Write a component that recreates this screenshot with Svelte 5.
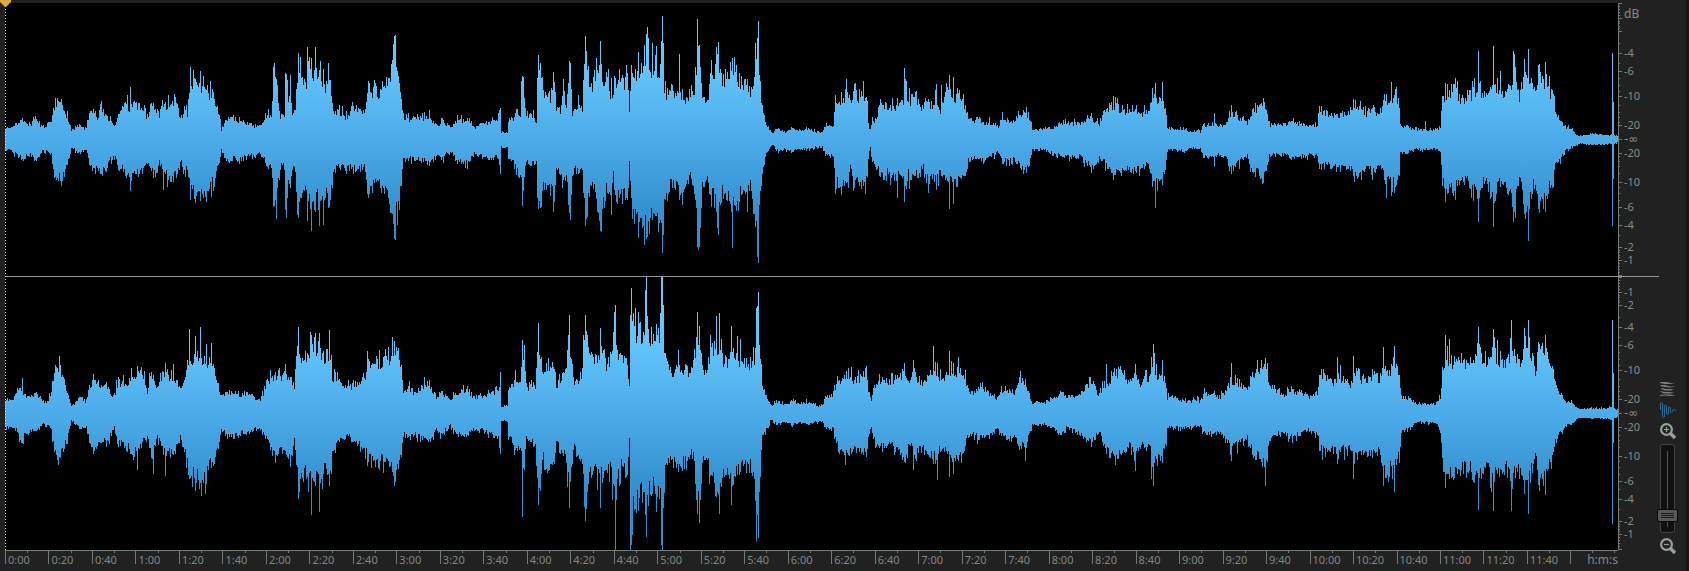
<script lang="ts">
  type Point = [x: number, up: number, down: number];

  interface Channel {
    name: string;
    envelope: Point[];
    peaks: Point[];
  }

  // Amplitudes are stored in steps of 1/375 of full scale
  const FULL_SCALE = 375;
  const FIRST_COLUMN = 5;
  const LAST_COLUMN = 1618;

  // "x up down" triplets separated by commas
  function parse(data: string): Point[] {
    return data
      .trim()
      .split(',')
      .map((item) => item.trim().split(' ').map(Number) as Point);
  }

  const channels: Channel[] = [
    {
      name: 'Left channel',
      envelope: parse(`
        5 33 33,10 30 30,15 42 42,20 45 50,22 60 56,25 45 52,28 40 42,32 42 48,34 60 62,37 48 52,42 36 35,47 36 32,
        51 55 45,54 92 90,57 110 118,60 100 105,63 95 105,66 68 75,69 50 45,71 25 22,75 32 30,78 42 42,82 35 33,
        86 30 30,89 72 65,93 95 92,97 55 80,101 85 92,105 70 80,109 55 62,113 42 50,115 40 50,118 80 80,122 85 80,
        125 100 95,130 90 110,135 100 95,139 90 100,144 85 70,146 55 60,151 100 85,157 85 85,159 68 60,162 100 90,
        167 95 105,172 115 110,177 90 100,180 60 60,184 80 85,187 75 85,190 160 145,195 150 140,200 155 150,
        205 140 145,210 130 130,213 120 120,217 85 85,220 50 55,221 22 22,224 50 50,228 62 55,234 60 55,240 48 52,
        246 48 50,252 40 42,258 35 40,263 45 48,266 70 72,271 70 72,273 180 170,276 190 175,278 100 110,280 65 70,
        284 65 75,286 175 185,288 100 130,290 148 130,292 70 70,295 80 90,297 180 200,299 200 200,302 160 150,
        306 150 155,309 210 160,311 200 200,315 195 155,319 180 170,323 170 170,326 150 150,329 190 180,331 140 140,
        333 70 80,337 80 80,342 75 75,347 60 75,352 85 75,357 80 85,363 75 75,365 80 85,367 150 150,371 140 130,
        376 135 120,382 140 130,388 160 150,392 200 200,394 285 270,396 190 200,399 165 160,401 130 130,403 60 60,
        410 57 54,420 60 58,425 62 60,430 60 68,435 45 50,438 32 40,441 60 60,446 42 40,452 35 35,457 55 55,
        462 55 62,468 60 65,474 35 42,480 45 48,490 50 52,497 55 50,500 75 90,501 20 20,507 20 20,508 58 60,
        513 60 65,516 90 90,519 70 100,520 65 90,521 150 120,523 175 170,525 80 70,529 65 65,533 75 70,536 50 60,
        537 170 150,539 220 185,541 160 170,543 130 125,547 120 140,551 120 140,554 180 170,556 90 85,560 85 100,
        563 140 130,566 85 90,568 190 170,570 210 190,572 70 95,576 90 80,579 110 100,582 90 90,584 200 190,
        585 270 235,587 200 200,590 155 120,594 160 140,597 200 190,600 220 230,603 160 170,606 170 140,610 130 140,
        613 120 100,615 160 170,619 165 160,624 160 160,628 150 150,629 60 60,630 120 130,631 190 190,635 180 210,
        639 195 230,643 185 220,646 270 265,649 200 210,653 210 195,657 190 200,660 190 220,661 270 260,662 335 312,
        664 150 190,666 130 150,670 130 130,675 120 130,680 130 140,685 110 135,690 120 110,694 125 130,696 200 200,
        697 300 290,700 200 230,702 130 140,706 110 100,710 150 150,715 190 165,718 230 220,721 165 145,726 180 155,
        731 200 190,735 180 185,740 165 150,746 165 150,750 130 130,753 170 180,755 240 240,758 280 310,759 190 200,
        761 120 120,763 70 75,766 45 40,769 30 25,772 18 16,777 30 30,784 22 28,792 32 32,800 25 27,808 30 28,
        815 22 22,822 22 22,825 40 45,833 40 45,835 110 120,838 115 130,843 110 125,847 145 120,850 100 80,
        854 130 140,858 120 110,863 135 140,867 95 110,868 45 50,870 25 22,872 50 65,876 60 70,879 100 95,884 100 90,
        890 90 100,896 95 105,902 105 110,905 140 140,908 105 100,913 120 110,918 100 95,922 80 75,926 115 100,
        931 100 105,936 115 120,940 85 95,945 125 110,950 115 115,956 115 120,962 110 100,965 90 80,968 60 60,
        973 50 50,978 65 60,983 45 60,988 50 50,994 40 45,998 30 35,1001 65 60,1007 55 60,1013 50 55,1016 60 65,
        1020 75 75,1025 75 80,1028 70 70,1032 28 30,1037 28 28,1043 30 28,1050 30 35,1056 38 40,1062 45 48,
        1068 45 48,1074 45 48,1080 45 50,1086 60 65,1092 60 75,1099 45 55,1102 70 55,1106 85 75,1112 100 95,
        1118 90 85,1125 80 80,1132 90 90,1138 75 85,1144 75 75,1149 80 75,1151 120 110,1155 115 130,1160 110 110,
        1165 100 100,1167 30 30,1175 28 28,1185 28 33,1192 18 25,1198 26 28,1200 20 24,1203 40 48,1212 44 50,
        1219 38 42,1226 45 55,1230 75 80,1235 70 80,1241 60 55,1247 45 50,1250 70 85,1256 90 90,1262 105 110,
        1266 90 90,1269 42 40,1277 42 42,1285 42 42,1293 50 55,1302 40 48,1310 42 45,1317 42 45,1319 85 80,
        1325 75 75,1332 65 75,1338 70 80,1345 75 70,1351 75 85,1354 95 95,1360 85 100,1366 75 80,1372 90 90,
        1377 75 80,1382 90 80,1384 120 115,1390 110 120,1395 125 130,1399 105 100,1400 40 35,1407 38 38,1414 28 28,
        1425 28 28,1435 26 27,1440 35 32,1442 110 110,1446 130 140,1454 150 145,1460 115 110,1466 120 120,
        1472 130 130,1478 150 160,1483 120 120,1490 135 130,1493 150 175,1499 140 120,1506 140 130,1511 165 165,
        1514 195 195,1517 160 150,1519 110 110,1523 175 165,1528 180 190,1533 140 130,1536 130 140,1538 180 180,
        1545 165 175,1550 135 130,1553 120 120,1555 75 70,1560 50 55,1565 38 35,1572 25 20,1578 10 12,1590 14 14,
        1600 14 14,1610 12 12,1612 20 20,1615 10 10,1618 10 10`),
      peaks: parse(`
        130 145 142,163 90 138,190 200 165,195 165 175,200 188 170,203 175 160,273 200 185,285 183 195,298 238 215,
        307 253 225,311 225 250,315 255 200,319 190 238,323 195 235,328 210 188,394 285 272,429 82 72,500 87 95,
        522 175 182,538 233 190,553 186 200,563 165 110,569 217 202,585 285 238,600 270 252,608 195 150,611 170 208,
        619 195 160,626 205 160,638 240 270,646 290 272,647 310 268,652 265 220,656 256 210,661 270 230,662 338 312,
        679 235 165,682 140 180,697 332 295,699 260 295,711 218 185,716 255 200,718 268 262,732 225 298,734 228 180,
        747 165 200,755 265 240,758 326 340,841 130 152,846 165 120,865 115 150,897 115 160,904 197 172,909 142 135,
        928 110 146,936 152 138,941 150 100,949 178 192,953 172 178,957 142 130,1026 90 92,1113 120 110,1152 142 130,
        1155 155 188,1162 158 125,1214 72 75,1231 95 95,1263 115 120,1353 112 100,1386 125 162,1391 158 155,
        1395 140 130,1425 50 30,1445 155 172,1455 170 165,1478 242 228,1493 256 240,1500 187 130,1513 243 228,
        1524 220 205,1528 249 280,1538 205 190,1545 212 200,1612 239 239,1613 102 108`)
    },
    {
      name: 'Right channel',
      envelope: parse(`
        5 38 40,12 38 38,16 55 50,21 70 75,25 50 60,30 50 50,37 55 50,42 35 30,47 30 30,51 60 50,54 130 110,
        57 140 140,60 120 115,64 95 95,67 65 70,71 22 20,75 30 30,80 45 42,86 35 40,89 75 75,93 100 100,97 95 95,
        101 80 80,106 80 75,111 55 60,114 48 40,117 85 80,122 85 80,127 90 90,131 100 110,136 115 110,143 110 80,
        147 65 65,151 110 110,157 70 65,161 110 90,165 125 120,169 95 90,173 110 125,178 80 75,181 70 65,185 110 110,
        189 160 160,195 160 175,200 160 180,205 150 190,209 150 150,213 140 140,217 90 90,221 45 45,226 65 60,
        233 60 70,240 50 55,246 60 55,252 50 50,260 40 40,264 65 60,269 95 90,275 105 110,280 100 100,285 110 110,
        290 100 120,294 75 80,297 190 180,301 170 180,306 160 170,310 190 190,315 195 185,320 185 190,325 160 150,
        330 180 180,332 100 100,337 95 85,342 80 75,348 75 60,353 80 90,360 90 90,365 95 100,367 140 130,373 130 120,
        380 140 130,387 150 140,391 175 150,394 200 195,398 150 150,401 120 120,403 58 60,408 75 65,412 60 60,
        418 60 65,425 85 70,430 75 75,436 45 45,441 60 60,450 40 35,457 60 60,465 70 65,473 45 45,480 50 45,
        490 55 60,498 65 65,500 90 95,501 20 18,507 22 20,508 75 60,513 85 85,517 100 110,520 70 90,522 190 160,
        524 150 150,526 70 65,530 80 75,535 75 90,537 200 200,540 150 220,543 130 120,547 140 160,553 135 160,
        556 80 75,560 95 100,565 100 120,568 240 190,571 160 170,573 95 100,578 100 110,582 120 130,584 230 240,
        587 220 240,590 155 160,596 160 165,601 180 180,605 140 160,610 150 155,614 240 230,617 160 190,621 150 150,
        626 160 160,628 110 110,629 75 75,631 280 330,634 240 250,638 230 230,642 220 220,646 280 270,650 220 200,
        656 200 215,660 240 240,662 360 360,664 200 200,665 160 160,668 130 130,672 120 135,680 130 140,688 120 120,
        693 130 120,696 200 220,699 190 240,703 110 130,706 120 110,710 180 170,715 190 210,719 200 225,723 150 160,
        728 140 165,732 200 210,737 160 160,743 150 150,750 140 150,754 150 170,756 270 280,759 200 220,762 70 65,
        767 40 40,771 20 15,776 35 32,783 25 24,793 35 30,800 28 26,808 32 30,815 22 24,822 22 24,825 45 42,
        833 50 45,836 90 85,840 95 110,847 110 120,852 90 100,858 95 100,863 110 110,867 100 110,868 60 60,871 35 35,
        873 75 75,879 100 95,884 95 90,890 90 85,896 100 110,904 110 120,909 95 90,915 100 110,921 90 95,926 100 110,
        932 100 115,937 120 120,941 90 90,946 110 115,952 120 125,958 120 125,964 115 100,968 65 60,974 60 60,
        979 75 70,985 70 60,991 50 60,997 40 45,1001 65 60,1008 65 70,1014 60 60,1018 100 90,1024 95 95,1028 65 70,
        1032 30 30,1040 32 30,1048 32 35,1056 50 50,1062 60 60,1066 45 40,1073 50 50,1080 55 55,1086 80 75,
        1092 85 80,1099 50 50,1103 80 85,1109 90 100,1115 115 115,1120 120 120,1125 95 100,1130 90 90,1134 125 125,
        1139 85 90,1145 95 100,1150 110 100,1153 140 160,1157 110 120,1162 115 120,1166 80 80,1167 45 40,1175 45 40,
        1183 35 40,1190 35 38,1198 38 38,1200 30 32,1203 55 55,1212 58 60,1220 45 50,1226 70 80,1232 90 100,
        1238 90 85,1243 75 80,1247 65 65,1252 110 110,1258 120 125,1264 150 140,1268 100 100,1271 80 60,1276 65 60,
        1283 50 55,1290 65 65,1297 60 62,1305 50 45,1312 50 50,1318 60 60,1319 100 100,1326 100 110,1333 85 90,
        1338 110 115,1345 95 100,1350 75 90,1354 130 130,1360 95 120,1367 100 110,1373 105 110,1379 100 100,
        1383 130 150,1389 120 160,1395 140 140,1399 115 120,1401 50 50,1408 45 48,1414 28 25,1425 26 24,1436 28 27,
        1440 45 50,1442 110 120,1446 150 170,1452 150 175,1460 145 160,1467 140 150,1473 150 165,1478 200 195,
        1482 150 160,1488 160 150,1493 180 190,1500 150 150,1507 150 160,1512 200 200,1516 150 150,1520 140 150,
        1524 200 200,1529 190 190,1535 120 110,1538 180 190,1545 180 195,1549 130 120,1552 150 130,1555 75 80,
        1560 60 50,1566 35 35,1572 30 28,1578 12 12,1590 14 14,1605 13 13,1612 20 18,1615 12 12,1618 12 12`),
      peaks: parse(`
        22 98 80,59 158 120,137 130 155,153 105 165,165 138 172,189 232 180,195 212 212,200 238 190,206 190 195,
        211 195 150,298 238 236,311 215 280,315 220 200,319 220 270,329 230 200,367 172 145,392 210 160,394 200 200,
        429 92 70,500 115 112,515 120 100,522 203 285,538 250 252,569 270 260,585 270 295,600 235 260,614 280 200,
        615 297 375,630 270 375,631 345 360,638 278 268,645 338 280,646 375 340,656 245 270,661 375 360,662 375 375,
        678 175 160,697 278 275,699 240 300,716 268 230,719 275 275,731 240 250,737 213 170,740 205 160,756 290 350,
        757 295 280,758 335 342,851 128 110,866 130 120,904 138 132,913 148 155,933 185 140,937 140 182,949 173 175,
        953 140 165,958 155 130,1025 95 130,1106 135 110,1135 135 158,1151 155 180,1153 192 200,1162 148 135,
        1231 140 130,1265 152 200,1337 155 140,1353 158 180,1383 184 200,1394 185 215,1445 215 205,1449 205 180,
        1478 238 265,1493 232 267,1511 256 267,1524 235 220,1528 256 277,1539 190 212,1545 215 225,1612 256 304,
        1613 110 80`)
    }
  ];

  // Small seeded generator, so the wave looks the same on each load
  function createRandom(seed: number) {
    let state = seed;
    return () => {
      state = (state * 1664525 + 1013904223) % 4294967296;
      return state / 4294967296;
    };
  }

  function wavePath(channel: Channel, seed: number): string {
    const random = createRandom(seed);
    const { envelope, peaks } = channel;
    let top = '';
    let bottom = '';
    let i = 0;

    // Mostly small dips, now and then a transient that sticks out
    const ripple = () => {
      const r = random();
      return r > 0.88 ? 1.1 + random() * 0.16 : 0.82 + r * 0.32;
    };

    for (let x = FIRST_COLUMN; x < LAST_COLUMN; x++) {
      while (i < envelope.length - 2 && envelope[i + 1][0] <= x) i++;
      const [x0, up0, down0] = envelope[i];
      const [x1, up1, down1] = envelope[i + 1];
      const t = (x - x0) / (x1 - x0);
      let up = (up0 + (up1 - up0) * t) * ripple();
      let down = (down0 + (down1 - down0) * t) * ripple();
      const peak = peaks.find((p) => p[0] === x);
      if (peak) {
        up = peak[1];
        down = peak[2];
      }
      up = Math.min(up, FULL_SCALE);
      down = Math.min(down, FULL_SCALE);
      top += `V${Math.round(FULL_SCALE - up)}H${x + 1}`;
      bottom = `H${x + 1}V${Math.round(FULL_SCALE + down)}` + bottom;
    }
    return `M${FIRST_COLUMN} ${FULL_SCALE}${top}V${FULL_SCALE}${bottom}H${FIRST_COLUMN}Z`;
  }

  const paths = channels.map((channel, i) => wavePath(channel, 77 + i * 13));

  // Decibel scale
  const HALF = 136;
  const majorDb = [1, 2, 4, 6, 10, 20];
  const minorDb = [0.2, 0.4, 0.6, 0.8, 1.2, 1.4, 1.6, 1.8, 3, 5, 7, 8, 9, 12, 14, 16, 18];
  const offset = (db: number) => Math.round(HALF * Math.pow(10, -db / 20));

  // The top of the first scale holds the unit in place of -1 and -2
  function showLabel(channel: number, side: number, db: number): boolean {
    return !(channel === 0 && side === -1 && db < 4);
  }

  // Time ruler: the last, longer part is left for the format
  const DURATION = 742;
  const STEP = 20;
  const marks = Array.from({ length: Math.floor(DURATION / STEP) - 1 }, (_, i) => i * STEP);

  function formatTime(seconds: number): string {
    return `${Math.floor(seconds / 60)}:${String(seconds % 60).padStart(2, '0')}`;
  }

  let zoom = $state(13);

  function changeZoom(amount: number) {
    zoom = Math.max(0, Math.min(100, zoom + amount));
  }
</script>

<div class="editor">
  <main class="main">
    {#each channels as channel, c}
      <section class="channel">
        <svg
          class="wave"
          viewBox="{FIRST_COLUMN} 0 {LAST_COLUMN - FIRST_COLUMN} {FULL_SCALE * 2}"
          preserveAspectRatio="none"
          shape-rendering="crispEdges"
          role="img"
          aria-label={channel.name}
        >
          <defs>
            <linearGradient id="wave-fill-{c}" gradientUnits="userSpaceOnUse" x1="0" y1="0" x2="0" y2="750">
              <stop offset="0" stop-color="#6bcbff" />
              <stop offset="0.25" stop-color="#62c4fa" />
              <stop offset="0.5" stop-color="#4cabe9" />
              <stop offset="0.75" stop-color="#3592d0" />
              <stop offset="1" stop-color="#2f8ccb" />
            </linearGradient>
          </defs>
          <path d={paths[c]} fill="url(#wave-fill-{c})" />
        </svg>

        <svg class="scale" viewBox="0 0 41 273" aria-label="Level in decibels">
          <g class="ticks">
            <path d="M0.5 0V273M0 0.5H4M0 272.5H4" />
            <path d="M0 136.5H4" />
            {#each [-1, 1] as side}
              {#each majorDb as db}
                <path d="M0 {136.5 + side * offset(db)}h4" />
              {/each}
              {#each minorDb as db}
                <path d="M0 {136.5 + side * offset(db)}h2" />
              {/each}
            {/each}
          </g>
          {#if c === 0}
            <text class="unit" x="6" y="15">dB</text>
          {/if}
          <text class="silence" x="6" y="140">-∞</text>
          {#each [-1, 1] as side}
            {#each majorDb as db}
              {#if showLabel(c, side, db)}
                <text x="6" y={140 + side * offset(db)}>-{db}</text>
              {/if}
            {/each}
          {/each}
        </svg>
      </section>
    {/each}

    <div class="ruler">
      {#each marks as seconds}
        <div class="mark">
          <span class="half"></span>
          {formatTime(seconds)}
        </div>
      {/each}
      <div class="mark last">
        <span class="half"></span>
        <span class="half end"></span>
      </div>
      <span class="format">h:m:s</span>
    </div>

    <!-- Playhead -->
    <div class="playhead">
      <svg width="11" height="8" viewBox="0 0 11 8" aria-hidden="true">
        <path d="M0 0H11V2L6 7H5L0 2Z" fill="#e0a83c" />
      </svg>
    </div>
  </main>

  <aside class="tools">
    <button type="button" aria-label="Show spectrogram">
      <svg width="16" height="16" viewBox="0 0 16 16" aria-hidden="true">
        <g fill="#7a7f7d">
          <path d="M0 1L6 1L11 2L15 2L10 3L5 3L0 2Z" />
          <path d="M1 4L5 4L10 5.500L16 5.500L10 6.500L5 6L0 5Z" />
          <path d="M2 7L6 8L11 8L14 9L10 9.500L5 9.500L1 8Z" />
          <path d="M0 10L5 11L10 11L15 12L10 12.500L4 12.500L1 11Z" />
          <path d="M0 14L5 13.500L10 13.500L16 15L10 15L5 14.500L0 15Z" />
        </g>
      </svg>
    </button>
    <button type="button" aria-label="Show waveform">
      <svg width="16" height="16" viewBox="0 0 16 16" aria-hidden="true">
        <path
          d="M0.500 8V2Q0.500 0.500 1.500 0.500T2.500 2V14Q2.500 15.500 3.500 15.500T4.500 14V4.500Q4.500 3 5.500 3T6.500 4.500V11Q6.500 12.500 7.500 12.500T8.500 11V6Q8.500 5 9.500 5T10.500 6.500V9.500Q10.500 10.500 11.500 10.500T12.500 8.500Q13 6.500 14 7.500T16 8.500"
          fill="none"
          stroke="#276c98"
        />
      </svg>
    </button>
    <button type="button" aria-label="Zoom in" onclick={() => changeZoom(5)}>
      <svg width="16" height="16" viewBox="0 0 16 16" aria-hidden="true">
        <g fill="none" stroke="#98a09d">
          <circle cx="6.500" cy="6.500" r="5.400" stroke-width="2.200" />
          <path d="M10 10L15 15" stroke-width="3.400" />
          <path d="M4 6.500h5M6.500 4v5" stroke-width="1.200" />
        </g>
      </svg>
    </button>
    <label class="slider">
      <input type="range" min="0" max="100" bind:value={zoom} aria-label="Vertical zoom" />
    </label>
    <button type="button" aria-label="Zoom out" onclick={() => changeZoom(-5)}>
      <svg width="16" height="16" viewBox="0 0 16 16" aria-hidden="true">
        <g fill="none" stroke="#98a09d">
          <circle cx="6.500" cy="6.500" r="5.400" stroke-width="2.200" />
          <path d="M10 10L15 15" stroke-width="3.400" />
          <path d="M4 6.500h5" stroke-width="1.200" />
        </g>
      </svg>
    </button>
  </aside>
</div>

<style>
  :global(body) {
    margin: 0;
    background: #212121;
  }

  .editor {
    display: flex;
    min-height: 100vh;
    box-sizing: border-box;
    border-right: 3px solid #151315;
    border-bottom: 1px solid #1a1a1a;
    background: #212121;
    color: #808784;
    font-family: 'Noto Sans', 'Open Sans', sans-serif;
    font-size: 11px;
    line-height: 16px;
  }

  .main {
    position: relative;
    flex: 1;
    min-width: 0;
    padding: 3px 0 0 5px;
  }

  .channel {
    display: flex;
    height: 273px;
  }

  .channel:first-child {
    border-bottom: 1px solid #939393;
  }

  .wave {
    display: block;
    flex: 1;
    min-width: 0;
    height: 100%;
    background: #000;
  }

  .scale {
    flex: none;
    width: 41px;
    height: 273px;
    fill: #868d8a;
  }

  .ticks {
    fill: none;
    stroke: #727a77;
    stroke-width: 1;
  }

  .unit {
    font-size: 12px;
  }

  .silence {
    font-family: 'DejaVu Sans', sans-serif;
    font-size: 12px;
  }

  .ruler {
    display: flex;
    margin-right: 41px;
    height: 20px;
    border-top: 1px solid #727a77;
    position: relative;
  }

  .mark {
    display: flex;
    flex: 20 1 0;
    min-width: 0;
    position: relative;
    box-sizing: border-box;
    height: 13px;
    padding-left: 2px;
    border-left: 1px solid #727a77;
    line-height: 18px;
    white-space: nowrap;
  }

  .mark.last {
    flex-grow: 22;
  }

  .half {
    position: absolute;
    left: 50%;
    top: 0;
    width: 1px;
    height: 2px;
    background: #727a77;
  }

  .last .half {
    left: 45%;
  }

  .last .half.end {
    left: 91%;
  }

  .format {
    position: absolute;
    right: 0;
    top: 0;
    font-size: 12px;
    line-height: 18px;
  }

  .playhead {
    position: absolute;
    left: 0;
    top: 0;
    width: 11px;
    height: 550px;
    background: repeating-linear-gradient(#eee86e 0 1px, transparent 1px 3px) center top / 1px 100% no-repeat;
  }

  .playhead svg {
    display: block;
  }

  .tools {
    display: flex;
    flex: none;
    flex-direction: column;
    align-items: center;
    justify-content: flex-end;
    gap: 5px;
    width: 17px;
    padding: 0 10px 17px 0;
  }

  button {
    display: block;
    margin: 0;
    padding: 0;
    border: 0;
    background: none;
    line-height: 0;
    cursor: pointer;
  }

  .slider {
    display: flex;
    justify-content: center;
    box-sizing: border-box;
    width: 15px;
    height: 89px;
    border: 1px solid #444;
    border-radius: 3px;
    background: linear-gradient(#555, #555) center / 1px 76px no-repeat #101010;
  }

  .slider input {
    flex: none;
    width: 21px;
    height: 87px;
    margin: 0;
    appearance: none;
    background: none;
    writing-mode: vertical-lr;
    direction: rtl;
    cursor: pointer;
  }

  .slider input::-webkit-slider-thumb {
    appearance: none;
    box-sizing: border-box;
    width: 21px;
    height: 13px;
    border: 1px solid #080808;
    border-radius: 2px;
    background:
      repeating-linear-gradient(#1c1c1c 0 1px, transparent 1px 2px) center / 13px 5px no-repeat,
      #595959;
  }
</style>
